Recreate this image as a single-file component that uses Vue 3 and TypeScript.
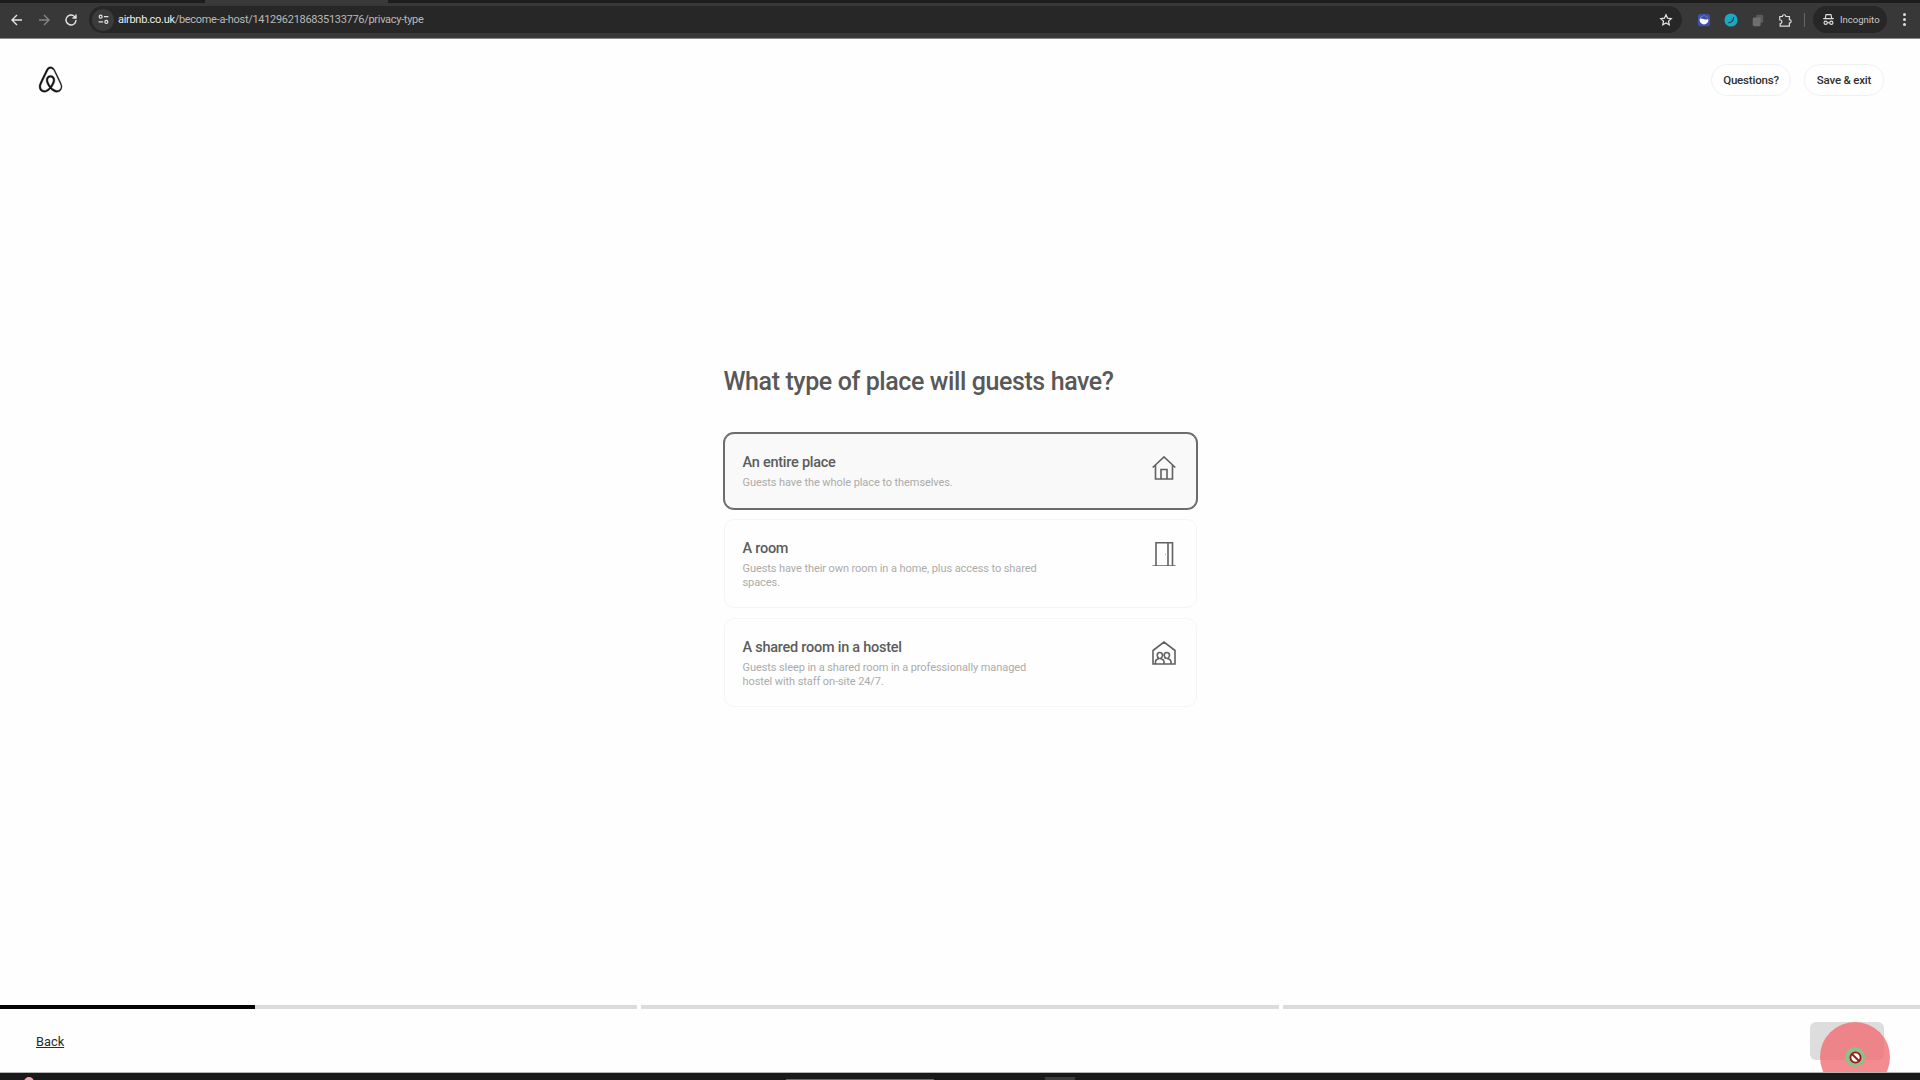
<script setup lang="ts">
interface Place {
  id: string
  title: string
  text: string
  selected: boolean
}
const places: Place[] = [
  { id: 'home', title: 'An entire place', text: 'Guests have the whole place to themselves.', selected: true },
  { id: 'door', title: 'A room', text: 'Guests have their own room in a home, plus access to shared spaces.', selected: false },
  { id: 'hostel', title: 'A shared room in a hostel', text: 'Guests sleep in a shared room in a professionally managed hostel with staff on-site 24/7.', selected: false }
]
const logo = 'M16 1c2.008 0 3.463.963 4.751 3.269l.533 1.025c1.954 3.83 6.114 12.54 7.1 14.836l.145.353c.667 1.591.91 2.472.96 3.396l.01.415.001.228c0 4.062-2.877 6.478-6.357 6.478-2.224 0-4.556-1.258-6.709-3.386l-.257-.26-.172-.179h-.011l-.176.185c-2.044 2.1-4.267 3.42-6.414 3.615l-.28.019-.267.006C5.377 31 2.5 28.584 2.5 24.522l.005-.469c.026-.928.23-1.768.83-3.244l.216-.524c.966-2.298 6.083-12.989 7.707-16.034C12.537 1.963 13.992 1 16 1zm0 2c-1.239 0-2.053.539-2.987 2.21l-.523 1.008c-1.926 3.776-6.06 12.43-7.031 14.692l-.345.836c-.427 1.071-.573 1.655-.605 2.24l-.009.33v.206C4.5 27.395 6.411 29 8.857 29c1.773 0 3.87-1.236 5.831-3.354-2.295-2.938-3.855-6.45-3.855-8.91 0-2.913 1.933-5.386 5.167-5.386 3.234 0 5.167 2.473 5.167 5.386 0 2.456-1.555 5.96-3.855 8.907C20.273 27.763 22.37 29 24.143 29c2.446 0 4.357-1.605 4.357-4.478l-.004-.411c-.034-.75-.2-1.24-.803-2.654l-.237-.6c-.971-2.262-5.105-10.916-7.031-14.692l-.523-1.008C18.953 3.539 17.239 3 16 3zm.001 10.35c-1.928 0-3.167 1.453-3.167 3.386 0 1.797 1.28 4.63 3.167 7.15 1.887-2.52 3.167-5.353 3.167-7.15 0-1.933-1.239-3.386-3.167-3.386z'
</script>

<template>
  <div class="page">
    <div class="browser">
      <div class="tabstrip"><span class="tab"></span></div>
      <div class="toolbar">
        <svg class="nav" viewBox="0 0 16 16"><path d="M13 8H3.500M8 3 3 8l5 5" /></svg>
        <svg class="nav off" viewBox="0 0 16 16"><path d="M3 8h9.500M8 3l5 5-5 5" /></svg>
        <svg class="nav" viewBox="0 0 16 16"><path d="M13 8a5 5 0 1 1-1.500-3.600L13 6M13 2.500V6H9.500" /></svg>
        <div class="omnibox">
          <span class="siteinfo">
            <svg viewBox="0 0 16 16"><circle cx="4.500" cy="4.500" r="1.800" /><path d="M8.500 4.500H14M2 11h5.500" /><circle cx="11.500" cy="11" r="1.800" /></svg>
          </span>
          <span class="url"><b>airbnb.co.uk</b>/become-a-host/1412962186835133776/privacy-type</span>
          <svg class="star" viewBox="0 0 16 16"><path d="m8 2 1.800 3.900 4.200.5-3.100 2.900.8 4.200L8 11.400 4.300 13.500l.8-4.200L2 6.400l4.200-.5z" /></svg>
        </div>
        <div class="exts">
          <svg class="ext" viewBox="0 0 16 16"><rect x="1" y="1" width="14" height="14" rx="3" fill="#3f51a5" /><circle cx="8" cy="8" r="5" fill="#fff" /><path d="M3.500 6.500C6 5 10 9.500 12.800 6.500 12 3.800 10 3 8 3 5.800 3 4 4.500 3.500 6.500z" fill="#3f51a5" /></svg>
          <svg class="ext" viewBox="0 0 16 16"><circle cx="8" cy="8" r="7.500" fill="#1aa9c4" /><path d="M5 11c3 .5 6-2 6-6.500" fill="none" stroke="#2b3a40" stroke-width="1.300" /></svg>
          <svg class="ext" viewBox="0 0 16 16"><rect x="6" y="2" width="8" height="9" rx="1.500" fill="#5a5a5a" /><rect x="2" y="5" width="9" height="10" rx="1.500" fill="#6f6f6f" /></svg>
          <svg class="ext puzzle" viewBox="0 0 16 16"><path d="M2 4h3a2 2 0 0 1 4 0h4v3.500a2 2 0 0 1 0 4V15H2.500v-3a2 2 0 0 0 0-4H2z" /></svg>
        </div>
        <span class="divider"></span>
        <div class="incognito">
          <svg viewBox="0 0 16 16"><path d="M4 6.500 5 2h6l1 4.500M1.500 7h13" /><circle cx="4.500" cy="12" r="2" /><circle cx="11.500" cy="12" r="2" /><path d="M6.500 12h3" /></svg>
          <span>Incognito</span>
        </div>
        <div class="kebab"><i></i><i></i><i></i></div>
      </div>
    </div>

    <header class="head">
      <svg class="logo" viewBox="0 0 32 32"><path :d="logo" /></svg>
      <div class="actions">
        <button class="pill" type="button">Questions?</button>
        <button class="pill" type="button">Save &amp; exit</button>
      </div>
    </header>

    <main class="main">
      <h1 class="heading">What type of place will guests have?</h1>
      <div class="cards">
        <div v-for="p in places" :key="p.id" class="card" :class="{ selected: p.selected }">
          <div class="copy">
            <div class="title">{{ p.title }}</div>
            <div class="text">{{ p.text }}</div>
          </div>
          <svg v-if="p.id === 'home'" class="icon" viewBox="0 0 24 24">
            <path d="M.7 11.500 12 .9l11.300 10.600M3.500 9v14h17V9M9 23V13.500h6V23" />
          </svg>
          <svg v-else-if="p.id === 'door'" class="icon" viewBox="0 0 24 24">
            <path d="M4 24V.7h16.500V24M.5 24h23M16 1v23M13.600 12.500h.4" />
          </svg>
          <svg v-else class="icon" viewBox="0 0 24 24">
            <path d="M1 23V9.500L12 1l11 8.500V23zM3.500 23v-2.500c0-2 2.500-2.500 3.500-3-1.500-1-1.800-2-1.800-3.300 0-1.700 1-2.700 2.600-2.700s2.700 1 2.700 2.700c0 1.300-.5 2.300-1.800 3.300 1 .5 3.300 1 3.300 3V23M12.500 17.500c1-.5 1.200-.5 1.200-.5-1.300-1-1.500-2-1.500-2.800 0-1.700 1-2.700 2.600-2.700s2.700 1 2.700 2.700c0 1.300-.5 2.300-1.800 3.300 1 .5 3.300 1 3.300 3V23" />
          </svg>
        </div>
      </div>
    </main>

    <div class="progress">
      <div class="seg first"><span class="fill"></span></div>
      <div class="seg"></div>
      <div class="seg"></div>
    </div>

    <footer class="foot">
      <a class="back" href="#">Back</a>
      <span class="next"></span>
      <div class="cursor">
        <span class="halo">
          <svg viewBox="0 0 14 14"><circle cx="7" cy="7" r="5.500" /><path d="m3.200 3.200 7.600 7.600" /></svg>
        </span>
      </div>
    </footer>

    <div class="taskbar">
      <span class="dot"></span>
      <span class="mark long"></span>
      <span class="mark short"></span>
    </div>
  </div>
</template>

<style scoped>
.page {
  width: 1920px;
  height: 1080px;
  display: flex;
  flex-direction: column;
  overflow: hidden;
  background: #fefefe;
  font-family: Roboto, "Liberation Sans", sans-serif;
}
.browser {
  flex: none;
}
.tabstrip {
  height: 3px;
  background: #1d1d1d;
  display: flex;
  padding-left: 205px;
}
.tab {
  width: 183px;
  background: #3a3a3a;
}
.toolbar {
  height: 36px;
  box-sizing: border-box;
  background: #383838;
  border-bottom: 1px solid #8a8a8a;
  display: flex;
  align-items: center;
  padding: 0 14px 2px 9px;
}
.nav {
  width: 16px;
  height: 16px;
  margin-right: 11px;
  fill: none;
  stroke: #e4e4e4;
  stroke-width: 1.400;
}
.nav.off {
  stroke: #858585;
}
.omnibox {
  margin-left: -1px;
  flex: 1;
  height: 27px;
  border-radius: 14px;
  background: #272727;
  display: flex;
  align-items: center;
  padding-right: 9px;
}
.siteinfo {
  width: 22px;
  height: 22px;
  margin-left: 3px;
  border-radius: 50%;
  background: #3b3b3b;
  display: flex;
  align-items: center;
  justify-content: center;
}
.siteinfo svg {
  width: 13px;
  height: 13px;
  fill: none;
  stroke: #e4e4e4;
  stroke-width: 1.500;
}
.url {
  margin-left: 4px;
  flex: 1;
  font-size: 11px;
  letter-spacing: -.3px;
  color: #b9b9b9;
  white-space: nowrap;
}
.url b {
  font-weight: 400;
  color: #ececec;
}
.star {
  width: 14px;
  height: 14px;
  fill: none;
  stroke: #e4e4e4;
  stroke-width: 1.400;
}
.exts {
  display: flex;
  gap: 13px;
  margin-left: 15px;
}
.ext {
  width: 14px;
  height: 14px;
}
.puzzle {
  fill: none;
  stroke: #dcdcdc;
  stroke-width: 1.400;
}
.divider {
  width: 1px;
  height: 14px;
  margin: 0 8px 0 12px;
  background: #666;
}
.incognito {
  width: 74px;
  height: 27px;
  box-sizing: border-box;
  padding-left: 9px;
  border-radius: 14px;
  background: #272727;
  display: flex;
  align-items: center;
  gap: 5px;
  font-size: 9.500px;
  color: #c9c9c9;
}
.incognito svg {
  width: 13px;
  height: 13px;
  fill: none;
  stroke: #dedede;
  stroke-width: 1.400;
}
.kebab {
  margin-left: 15px;
  width: 4px;
  display: flex;
  flex-direction: column;
  gap: 2px;
  align-items: center;
}
.kebab i {
  width: 3px;
  height: 3px;
  border-radius: 50%;
  background: #dcdcdc;
}
.head {
  flex: none;
  height: 81px;
  box-sizing: border-box;
  padding: 0 36px 0 37px;
  display: flex;
  align-items: center;
  justify-content: space-between;
}
.logo {
  width: 27px;
  height: 27px;
  fill: #111;
  stroke: #111;
  stroke-width: .5;
}
.actions {
  display: flex;
  gap: 13px;
}
.pill {
  width: 80px;
  height: 32px;
  padding: 0;
  border: 1px solid #f0f0f0;
  border-radius: 16px;
  background: #fff;
  font: 500 11.500px Roboto, "Liberation Sans", sans-serif;
  letter-spacing: -.2px;
  color: #2f2f2f;
}
.main {
  flex: 1;
  width: 473px;
  margin: 0 auto;
  padding-top: 244px;
  box-sizing: border-box;
}
.heading {
  margin: 0 0 33px;
  font-size: 25px;
  letter-spacing: -.4px;
  line-height: 36px;
  font-weight: 500;
  color: #585858;
}
.cards {
  display: flex;
  flex-direction: column;
  gap: 10px;
}
.card {
  box-sizing: border-box;
  padding: 19px 20px 17px 18px;
  border: 1px solid #f5f5f5;
  border-radius: 10px;
  display: flex;
  justify-content: space-between;
  align-items: flex-start;
}
.card.selected {
  min-height: 76px;
  background: #f9f9f9;
  border-color: #6c6c6c;
  box-shadow: 0 0 0 1px #6c6c6c;
}
.copy {
  width: 304px;
}
.title {
  font-size: 14.500px;
  letter-spacing: -.25px;
  line-height: 20px;
  font-weight: 500;
  color: #5c5c5c;
  margin-bottom: 3px;
}
.text {
  font-size: 11px;
  letter-spacing: -.08px;
  line-height: 14px;
  color: #ababab;
}
.icon {
  width: 24px;
  height: 24px;
  margin-top: 3px;
  fill: none;
  stroke: #616161;
  stroke-width: 1.600;
}
.progress {
  flex: none;
  height: 4px;
  display: flex;
  gap: 4px;
  background: #fefefe;
}
.seg {
  flex: 1;
  background: #dcdcdc;
}
.seg.first {
  flex: none;
  width: 637px;
}
.fill {
  display: block;
  width: 255px;
  height: 100%;
  background: #050505;
}
.foot {
  position: relative;
  flex: none;
  height: 63px;
  overflow: hidden;
  box-sizing: border-box;
  padding: 13px 36px 12px 36px;
  display: flex;
  align-items: center;
  justify-content: space-between;
}
.back {
  font-size: 12.800px;
  font-weight: 400;
  color: #2a2a2a;
  text-decoration: underline;
}
.next {
  width: 74px;
  height: 38px;
  border-radius: 6px;
  background: #dddddd;
}
.cursor {
  position: absolute;
  left: 1820px;
  top: 13px;
  width: 70px;
  height: 70px;
  border-radius: 50%;
  background: rgba(240, 110, 118, .8);
  display: flex;
  align-items: center;
  justify-content: center;
}
.halo {
  width: 20px;
  height: 20px;
  border-radius: 50%;
  background: #8fbf8b;
  display: flex;
  align-items: center;
  justify-content: center;
}
.halo svg {
  width: 13px;
  height: 13px;
  fill: #fff;
  stroke: #a01616;
  stroke-width: 2;
}
.taskbar {
  flex: none;
  height: 8px;
  overflow: hidden;
  background: #191919;
  border-top: 1px solid #b5b5b5;
  box-sizing: border-box;
  display: flex;
  align-items: flex-start;
  padding-left: 24px;
}
.dot {
  width: 10px;
  height: 10px;
  margin-top: 4px;
  border-radius: 50%;
  background: #f0a4b4;
}
.mark {
  display: block;
  background: #6a6a6a;
  margin-top: 6px;
  height: 2px;
}
.mark.long {
  width: 148px;
  margin-left: 752px;
}
.mark.short {
  width: 30px;
  margin-left: 111px;
  margin-top: 4px;
  height: 4px;
  background: #3c3c3c;
}
</style>
